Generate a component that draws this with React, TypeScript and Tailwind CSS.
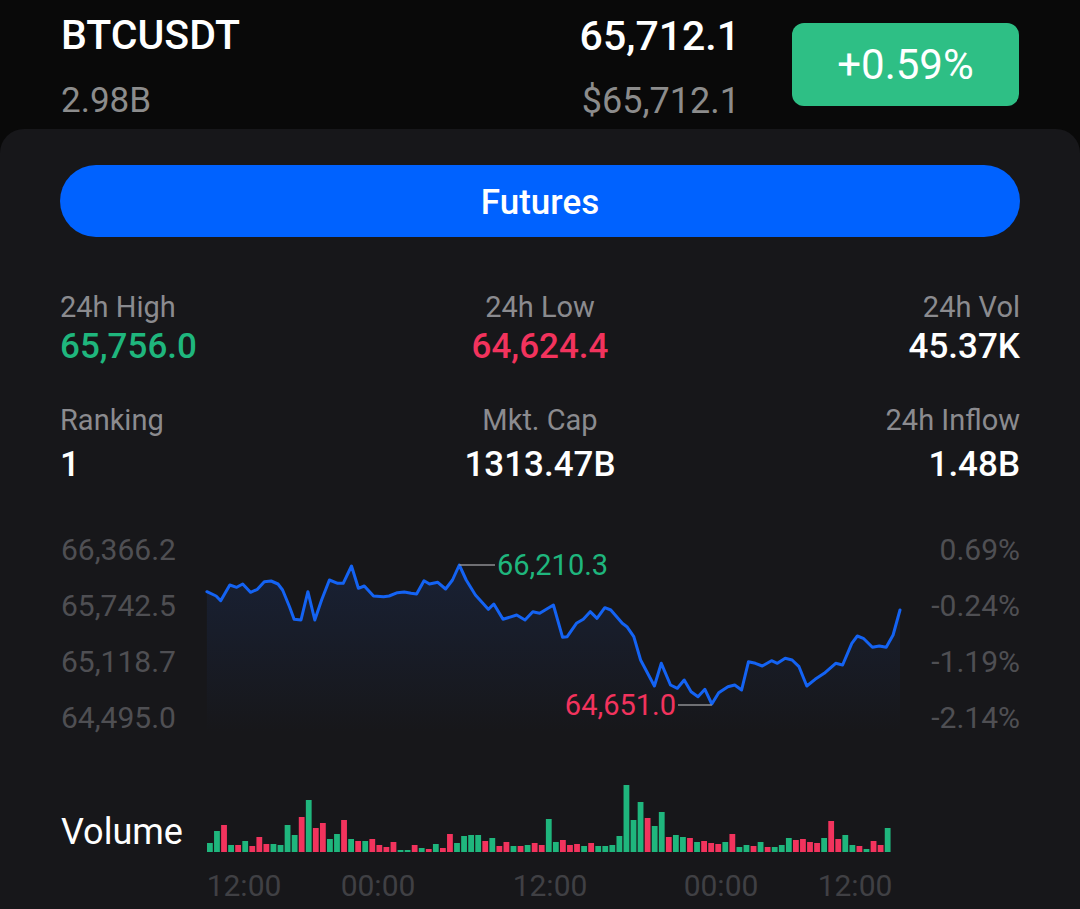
import React from 'react';

// price line, in page pixels (x, y)
const linePts: [number, number][] = [
    [206.9, 591.7], [216.1, 596], [220.7, 600.7], [229.8, 585], [236.7, 587.3], [242.7, 584],
    [250.5, 592.3], [257.4, 589.3], [264.3, 581.7], [271.1, 581], [278, 584], [282.6, 590],
    [289.5, 606.7], [294.1, 619.3], [301, 620], [307.9, 591.7], [314.8, 620], [321.6, 600],
    [329.4, 580], [337.7, 583.3], [343.2, 583.3], [351.5, 566], [358.4, 588.3], [364.3, 586],
    [373.5, 596], [383.6, 596.7], [389.1, 596], [397.4, 592.7], [404.3, 592], [411.1, 593.3],
    [416.6, 594], [424, 580.7], [429.5, 584], [437.8, 582.3], [445.6, 589], [452.5, 580],
    [459.3, 565], [466.2, 580], [475.4, 595], [488.3, 609.3], [493.8, 604], [503, 619.3],
    [516.7, 615], [525, 620], [532.8, 611.7], [539.7, 613.3], [553.4, 605], [562.6, 637.3],
    [567.2, 636.7], [576.4, 623.3], [583.3, 619.3], [590.2, 611.7], [597, 618.3], [604.8, 607.7],
    [610.8, 610], [622.3, 623.3], [626.9, 626.7], [633.8, 636.7], [640.6, 660], [654.4, 686],
    [661.3, 663.3], [670.5, 685], [677.4, 688.3], [684.2, 680], [691.1, 691.7], [698, 696.7],
    [704.9, 689.3], [711.8, 704], [718.7, 692.7], [727.9, 686.7], [734.7, 685], [741.6, 690],
    [748.5, 661.7], [755.4, 663.3], [762.3, 666], [771.5, 660.7], [777.4, 663.3], [785.2, 658.3],
    [792.1, 660], [799, 666.7], [806.8, 686], [815.1, 679.3], [824.2, 673.3], [835.7, 663.3],
    [842.6, 665], [851.8, 643.3], [857.3, 636], [863.3, 638.3], [872.4, 647.3], [879.3, 646],
    [886.2, 647.3], [893.1, 635], [900, 610],
];

const volHeights = [
    9, 21, 27, 7, 7, 11, 6, 15, 8, 8, 7, 27, 17, 35, 52, 24, 29, 13, 18, 32, 13, 11, 11, 13, 7,
    5, 10, 2, 2, 7, 4, 3, 8, 4, 18, 9, 16, 17, 17, 11, 14, 6, 10, 6, 6, 7, 9, 7, 33, 10,
    12, 7, 8, 6, 9, 6, 6, 7, 16, 67, 32, 50, 34, 26, 40, 15, 17, 15, 14, 10, 11, 9, 8, 10, 18,
    5, 7, 6, 10, 5, 5, 7, 14, 12, 13, 10, 9, 14, 31, 13, 17, 7, 6, 3, 11, 7, 24,
];
const volSides =
    'ggrgrgrrrggggrgrrggrgrgrrrrggrgrgrrggggrgrrgrgrrgg' +
    'rrrgrgggggggrggrggrgrrrgrggrgrgggrrrrgrrggrgrrg';

const GREEN = '#1fb67d';
const RED = '#f2335d';

const OX = 207;
const OY = 522;

const PriceChart: React.FC = () => {
    const pts = linePts.map(([x, y]) => [x - OX, y - OY]);
    const line = pts.map(([x, y], i) => `${i ? 'L' : 'M'}${x.toFixed(1)},${y.toFixed(1)}`).join(' ');
    const last = pts[pts.length - 1];
    const area = `${line} L${last[0]},210 L${pts[0][0]},210 Z`;

    return (
        <svg width="693" height="224" className="block overflow-visible">
            <defs>
                <linearGradient id="priceFill" x1="0" y1="0" x2="0" y2="1">
                    <stop offset="0%" stopColor="#1d3a78" stopOpacity="0.28" />
                    <stop offset="100%" stopColor="#1d3a78" stopOpacity="0" />
                </linearGradient>
            </defs>
            <path d={area} fill="url(#priceFill)" />
            <path d={line} fill="none" stroke="#1463f3" strokeWidth="3" strokeLinejoin="round" strokeLinecap="round" />

            {/* high marker */}
            <line x1={459.3 - OX} y1={565 - OY} x2={495 - OX} y2={565 - OY} stroke="#8e8e92" strokeWidth="1.5" />
            <text x={497 - OX} y={565 - OY + 10} fill={GREEN} fontSize="29" fontFamily="Roboto, sans-serif">66,210.3</text>

            {/* low marker */}
            <line x1={678 - OX} y1={705 - OY} x2={711.8 - OX} y2={705 - OY} stroke="#8e8e92" strokeWidth="1.5" />
            <text x={676 - OX} y={705 - OY + 10} fill={RED} fontSize="29" fontFamily="Roboto, sans-serif" textAnchor="end">64,651.0</text>
        </svg>
    );
};

const VolumeBars: React.FC = () => (
    <svg width="686" height="72" className="block">
        {volHeights.map((h, i) => (
            <rect
                key={i}
                x={i * 7.06}
                y={72 - h}
                width="5.8"
                height={h}
                fill={volSides[i] === 'g' ? GREEN : RED}
            />
        ))}
    </svg>
);

const Stat: React.FC<{ label: string; value: string; color: string; align: string; gap: string }> = ({ label, value, color, align, gap }) => (
    <div className={`flex flex-col ${align}`}>
        <div className="text-[29px] leading-[36px] text-[#8b8b8f]">{label}</div>
        <div className={`text-[35px] leading-[44px] font-medium ${gap}`} style={{ color }}>{value}</div>
    </div>
);

const App: React.FC = () => {
    const leftAxis = ['66,366.2', '65,742.5', '65,118.7', '64,495.0'];
    const rightAxis = ['0.69%', '-0.24%', '-1.19%', '-2.14%'];
    const times = [
        { t: '12:00', x: 37 },
        { t: '00:00', x: 171 },
        { t: '12:00', x: 343 },
        { t: '00:00', x: 514 },
        { t: '12:00', x: 648 },
    ];

    return (
        <div className="min-h-screen h-[909px] overflow-hidden flex flex-col bg-[#090909] font-['Roboto',sans-serif]">
            {/* ticker header */}
            <div className="h-[129px] flex pl-[61px] pr-[61px]">
                <div className="flex-1 pt-[15px]">
                    <div className="text-[41px] leading-[41px] font-medium text-white">BTCUSDT</div>
                    <div className="mt-[27px] text-[35px] leading-[36px] text-[#8c8c8c]">2.98B</div>
                </div>
                <div className="pt-[16px] text-right">
                    <div className="text-[41px] leading-[41px] font-medium text-white">65,712.1</div>
                    <div className="mt-[26px] text-[36px] leading-[36px] text-[#8c8c8c]">$65,712.1</div>
                </div>
                <div className="ml-[52px] mt-[23px] w-[227px] h-[83px] rounded-[12px] bg-[#2ebf85] flex items-center justify-center text-white text-[42px]">
                    +0.59%
                </div>
            </div>

            {/* market card */}
            <div className="flex-1 bg-[#17171a] rounded-t-[24px] px-[60px] pt-[36px]">
                <button className="w-full h-[72px] pt-[5px] rounded-full bg-[#0062ff] text-white text-[35px] font-medium">
                    Futures
                </button>

                <div className="grid grid-cols-3 mt-[52px]">
                    <Stat label="24h High" value="65,756.0" color={GREEN} align="items-start" gap="" />
                    <Stat label="24h Low" value="64,624.4" color={RED} align="items-center" gap="" />
                    <Stat label="24h Vol" value="45.37K" color="#ffffff" align="items-end" gap="" />
                </div>
                <div className="grid grid-cols-3 mt-[33px]">
                    <Stat label="Ranking" value="1" color="#ffffff" align="items-start" gap="mt-[5px]" />
                    <Stat label="Mkt. Cap" value="1313.47B" color="#ffffff" align="items-center" gap="mt-[5px]" />
                    <Stat label="24h Inflow" value="1.48B" color="#ffffff" align="items-end" gap="mt-[5px]" />
                </div>

                {/* price chart */}
                <div className="flex mt-[35px]">
                    <div className="w-[147px] pl-px">
                        {leftAxis.map(v => (
                            <div key={v} className="h-[56px] leading-[56px] text-[30px] text-[#4f4f53]">{v}</div>
                        ))}
                    </div>
                    <PriceChart />
                    <div className="flex-1 text-right">
                        {rightAxis.map(v => (
                            <div key={v} className="h-[56px] leading-[56px] text-[30px] text-[#4f4f53]">{v}</div>
                        ))}
                    </div>
                </div>

                {/* volume */}
                <div className="flex items-end h-[72px] mt-[34px]">
                    <div className="w-[147px] pl-px text-[36px] leading-[40px] text-white">Volume</div>
                    <VolumeBars />
                </div>
                <div className="relative h-[40px] mt-[14px] ml-[147px]">
                    {times.map(({ t, x }) => (
                        <span
                            key={x}
                            className="absolute top-0 -translate-x-1/2 text-[30px] leading-[40px] text-[#404044]"
                            style={{ left: x }}
                        >
                            {t}
                        </span>
                    ))}
                </div>
            </div>
        </div>
    );
};

export default App;
